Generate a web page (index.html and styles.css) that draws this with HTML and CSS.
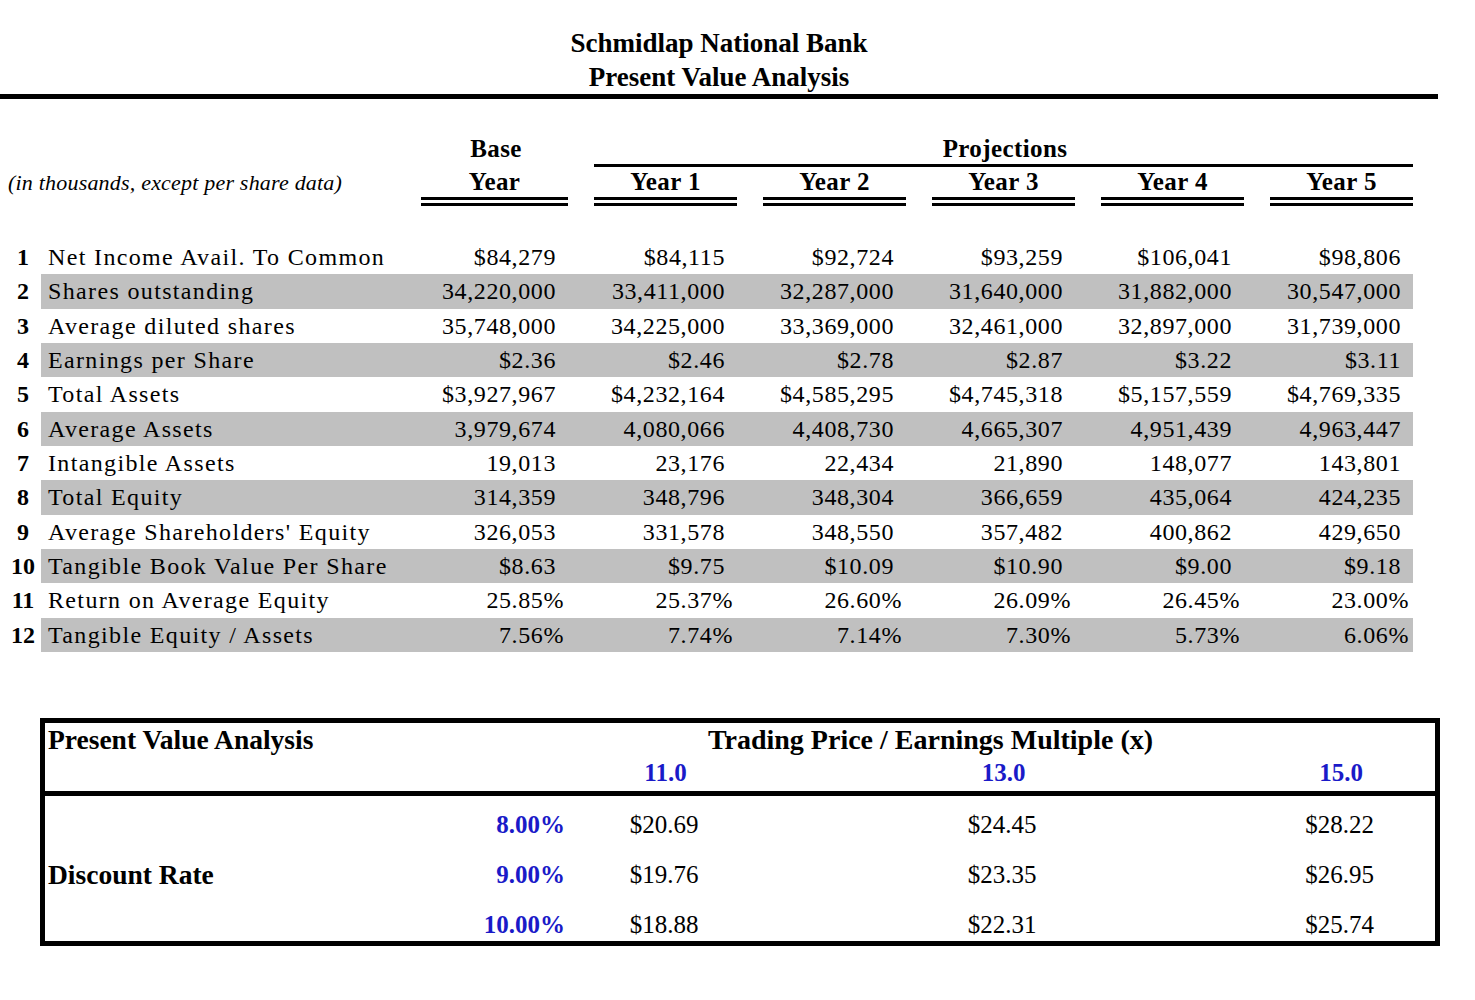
FILE: index.html
```html
<!DOCTYPE html>
<html lang="en">
<head>
<meta charset="utf-8">
<title>Schmidlap National Bank - Present Value Analysis</title>
<link rel="stylesheet" href="styles.css">
</head>
<body>
<header class="title">
  <div>Schmidlap National Bank</div>
  <div>Present Value Analysis</div>
</header>
<div class="rule"></div>

<section class="table">
  <div class="hrow hrow-a">
    <div class="base-h">Base</div>
    <div class="proj">Projections</div>
  </div>
  <div class="hrow hrow-b">
    <div class="subtitle">(in thousands, except per share data)</div>
    <div class="hcell"><span class="dbl">Year</span></div>
    <div class="hcell yr"><span class="dbl">Year 1</span></div>
    <div class="hcell yr"><span class="dbl">Year 2</span></div>
    <div class="hcell yr"><span class="dbl">Year 3</span></div>
    <div class="hcell yr"><span class="dbl">Year 4</span></div>
    <div class="hcell yr"><span class="dbl">Year 5</span></div>
  </div>

  <div class="rows">
    <div class="row"><div class="num">1</div><div class="lbl">Net Income Avail. To Common</div><div class="v">$84,279</div><div class="v">$84,115</div><div class="v">$92,724</div><div class="v">$93,259</div><div class="v">$106,041</div><div class="v">$98,806</div></div>
    <div class="row alt"><div class="num">2</div><div class="lbl">Shares outstanding</div><div class="v">34,220,000</div><div class="v">33,411,000</div><div class="v">32,287,000</div><div class="v">31,640,000</div><div class="v">31,882,000</div><div class="v">30,547,000</div></div>
    <div class="row"><div class="num">3</div><div class="lbl">Average diluted shares</div><div class="v">35,748,000</div><div class="v">34,225,000</div><div class="v">33,369,000</div><div class="v">32,461,000</div><div class="v">32,897,000</div><div class="v">31,739,000</div></div>
    <div class="row alt"><div class="num">4</div><div class="lbl">Earnings per Share</div><div class="v">$2.36</div><div class="v">$2.46</div><div class="v">$2.78</div><div class="v">$2.87</div><div class="v">$3.22</div><div class="v">$3.11</div></div>
    <div class="row"><div class="num">5</div><div class="lbl">Total Assets</div><div class="v">$3,927,967</div><div class="v">$4,232,164</div><div class="v">$4,585,295</div><div class="v">$4,745,318</div><div class="v">$5,157,559</div><div class="v">$4,769,335</div></div>
    <div class="row alt"><div class="num">6</div><div class="lbl">Average Assets</div><div class="v">3,979,674</div><div class="v">4,080,066</div><div class="v">4,408,730</div><div class="v">4,665,307</div><div class="v">4,951,439</div><div class="v">4,963,447</div></div>
    <div class="row"><div class="num">7</div><div class="lbl">Intangible Assets</div><div class="v">19,013</div><div class="v">23,176</div><div class="v">22,434</div><div class="v">21,890</div><div class="v">148,077</div><div class="v">143,801</div></div>
    <div class="row alt"><div class="num">8</div><div class="lbl">Total Equity</div><div class="v">314,359</div><div class="v">348,796</div><div class="v">348,304</div><div class="v">366,659</div><div class="v">435,064</div><div class="v">424,235</div></div>
    <div class="row"><div class="num">9</div><div class="lbl">Average Shareholders' Equity</div><div class="v">326,053</div><div class="v">331,578</div><div class="v">348,550</div><div class="v">357,482</div><div class="v">400,862</div><div class="v">429,650</div></div>
    <div class="row alt"><div class="num">10</div><div class="lbl">Tangible Book Value Per Share</div><div class="v">$8.63</div><div class="v">$9.75</div><div class="v">$10.09</div><div class="v">$10.90</div><div class="v">$9.00</div><div class="v">$9.18</div></div>
    <div class="row"><div class="num">11</div><div class="lbl">Return on Average Equity</div><div class="v pct">25.85%</div><div class="v pct">25.37%</div><div class="v pct">26.60%</div><div class="v pct">26.09%</div><div class="v pct">26.45%</div><div class="v pct">23.00%</div></div>
    <div class="row alt"><div class="num">12</div><div class="lbl">Tangible Equity / Assets</div><div class="v pct">7.56%</div><div class="v pct">7.74%</div><div class="v pct">7.14%</div><div class="v pct">7.30%</div><div class="v pct">5.73%</div><div class="v pct">6.06%</div></div>
  </div>
</section>

<section class="pv">
  <div class="pv-head">
    <div class="pv-title">Present Value Analysis</div>
    <div class="pv-multi">Trading Price / Earnings Multiple (x)</div>
    <div class="blue c1">11.0</div>
    <div class="blue c2">13.0</div>
    <div class="blue c3">15.0</div>
  </div>
  <div class="pv-body">
    <div class="rate blue">8.00%</div>
    <div class="c1">$20.69</div>
    <div class="c2">$24.45</div>
    <div class="c3">$28.22</div>

    <div class="pv-label">Discount Rate</div>
    <div class="rate blue">9.00%</div>
    <div class="c1">$19.76</div>
    <div class="c2">$23.35</div>
    <div class="c3">$26.95</div>

    <div class="rate blue">10.00%</div>
    <div class="c1">$18.88</div>
    <div class="c2">$22.31</div>
    <div class="c3">$25.74</div>
  </div>
</section>
</body>
</html>
```

FILE: styles.css
```css
html, body {
  margin: 0;
  padding: 0;
  background: #ffffff;
}

body {
  width: 1475px;
  font-family: "Liberation Serif", "Times New Roman", serif;
  color: #000;
}

/* ---------- Title ---------- */
.title {
  width: 1438px;
  padding-top: 26px;
  text-align: center;
  font-weight: bold;
  font-size: 27px;
  line-height: 34px;
}

.rule {
  width: 1438px;
  height: 5px;
  background: #000;
}

/* ---------- Main table ---------- */
.table {
  width: 1413px;
}

.hrow,
.row {
  display: grid;
  grid-template-columns: 41px 380px 147px repeat(5, 169px);
}

.hrow-a {
  margin-top: 35px;
  font-weight: bold;
  font-size: 25px;
  letter-spacing: 0.4px;
  line-height: 30px;
}

.base-h {
  grid-column: 3;
  padding-left: 3px;
  text-align: center;
}

.proj {
  grid-column: 4 / span 5;
  margin-left: 26px;
  padding-left: 3px;
  text-align: center;
  border-bottom: 3px solid #000;
}

.hrow-b {
  font-weight: bold;
  font-size: 25px;
  letter-spacing: 0.4px;
  line-height: 30px;
}

.subtitle {
  grid-column: 1 / span 2;
  padding-left: 8px;
  font-style: italic;
  font-weight: normal;
  font-size: 22px;
  letter-spacing: 0.2px;
  line-height: 32px;
}

.hcell {
  display: flex;
}

.hcell.yr {
  padding-left: 26px;
}

.dbl {
  flex: 1;
  text-align: center;
  border-bottom: 9px double #000;
}

.rows {
  margin-top: 34px;
}

.row {
  height: 34.33px;
  line-height: 34px;
  font-size: 24px;
}

.row.alt > .lbl,
.row.alt > .v {
  background: #c0c0c0;
}

.num {
  padding-left: 5px;
  text-align: center;
  font-weight: bold;
}

.lbl {
  padding-left: 7px;
  letter-spacing: 1.35px;
  white-space: nowrap;
}

.v {
  text-align: right;
  padding-right: 12px;
  letter-spacing: 0.6px;
  white-space: nowrap;
}

.v.pct {
  padding-right: 4px;
}

/* ---------- Present value box ---------- */
.pv {
  margin-top: 66px;
  margin-left: 40px;
  width: 1400px;
  box-sizing: border-box;
  border: 5px solid #000;
}

.pv-head,
.pv-body {
  display: grid;
  grid-template-columns: 355px 168px 192px 146px 192px 146px 1fr;
}

.pv-head {
  grid-template-rows: 33px 33px;
  padding-bottom: 2px;
  border-bottom: 5px solid #000;
  font-size: 26px;
  line-height: 33px;
}

.pv-title {
  grid-column: 1 / span 2;
  grid-row: 1;
  padding-left: 3px;
  font-weight: bold;
  font-size: 27.5px;
}

.pv-multi {
  grid-column: 2 / span 6;
  grid-row: 1;
  padding-left: 26px;
  text-align: center;
  font-weight: bold;
  font-size: 28px;
}

.pv-head .blue {
  grid-row: 2;
  font-weight: bold;
  font-size: 25px;
}

.c1 { grid-column: 3; text-align: center; padding-left: 3px; }
.c2 { grid-column: 5; text-align: center; padding-left: 3px; }
.c3 { grid-column: 7; text-align: center; padding-left: 3px; }

.blue {
  color: #1a1ac8;
}

.pv-body {
  height: 145px;
  box-sizing: border-box;
  padding-top: 4px;
  grid-template-rows: 50px 50px 50px;
  font-size: 25px;
  line-height: 50px;
}

.pv-body .c1,
.pv-body .c2,
.pv-body .c3 {
  padding-left: 0;
}

.pv-body .rate {
  grid-column: 2;
  text-align: right;
  padding-right: 3px;
  font-weight: bold;
}

.pv-label {
  grid-column: 1;
  grid-row: 2;
  padding-left: 3px;
  font-weight: bold;
  font-size: 27.5px;
}
```
